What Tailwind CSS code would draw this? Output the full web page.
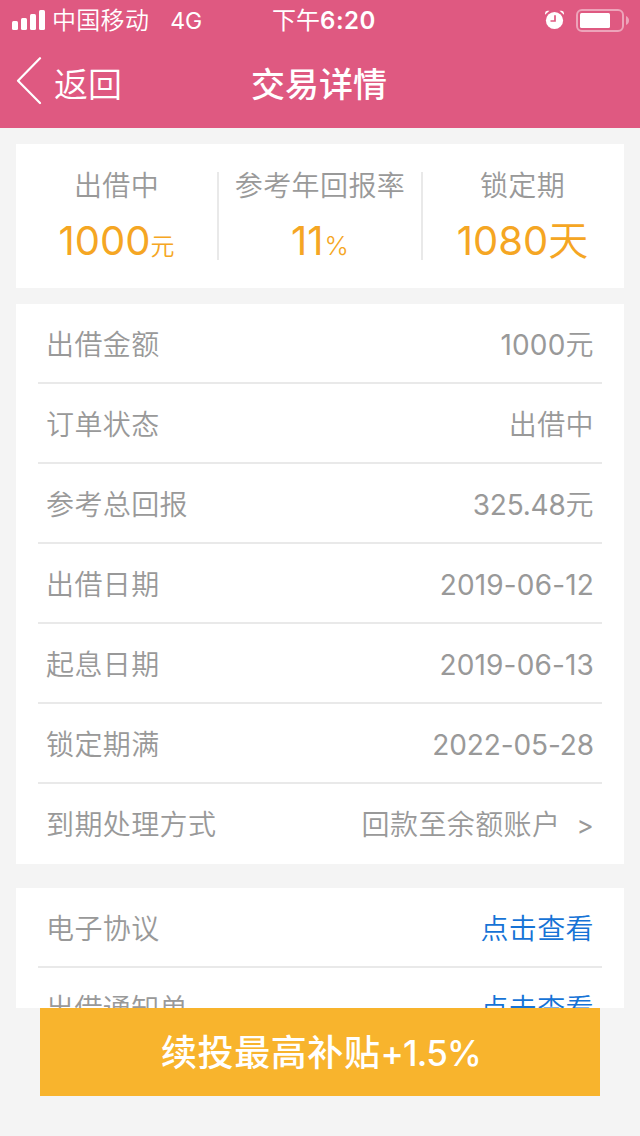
<!DOCTYPE html>
<html lang="zh-CN">
<head>
<meta charset="utf-8">
<title>交易详情</title>
<script src="https://cdn.jsdelivr.net/npm/@tailwindcss/browser@4"></script>
</head>
<body class="flex h-[1136px] w-[640px] flex-col overflow-hidden bg-[#f4f4f4] font-['Inter','Noto_Sans_CJK_SC',sans-serif] text-[28px] text-[#999]">
  <header class="h-32 shrink-0 bg-[#df5981] text-white">
    <div class="grid h-10 grid-cols-3 items-start text-[24px] leading-[42px]">
      <div class="flex items-start pl-3">
        <svg class="mt-2.5 h-5 w-[33px]" viewBox="0 0 33 20" fill="currentColor"><rect y="11" width="6" height="9" rx="1.5"/><rect x="9" y="8" width="6" height="12" rx="1.5"/><rect x="18" y="4" width="6" height="16" rx="1.5"/><rect x="27" width="6" height="20" rx="1.5"/></svg>
        <span class="ml-[7px] font-[350] tracking-[0.3px]">中国移动</span>
        <span class="ml-5 pl-px text-[23px]">4G</span>
      </div>
      <div class="pl-2 text-center font-semibold tracking-[0.5px]"><span class="font-normal tracking-[0]">下午</span>6:20</div>
      <div class="flex items-center justify-end pt-2 pr-[11px]">
        <svg class="mr-3 h-5 w-5" viewBox="0 0 20 20"><circle cx="10.500" cy="10.500" r="8.600" fill="#fff"/><path d="M1 4.800V3.500Q1 1 3.500 .8H5.500ZM20 4.800V3.500Q20 1 17.500 .8H15.500Z" fill="#fff"/><path d="M11 5.200V11H6.500" fill="none" stroke="#df5981" stroke-width="1.700"/></svg>
        <svg class="h-6 w-[53px]" viewBox="0 0 53 24"><rect x="1" y="2" width="46" height="21" rx="5" fill="none" stroke="#fff" stroke-opacity=".45" stroke-width="2"/><rect x="4" y="5" width="30" height="15" rx="1.500" fill="#fff"/><path d="M50 8Q53 9.500 53 12.500T50 17Z" fill="#fff" fill-opacity=".45"/></svg>
      </div>
    </div>
    <div class="grid h-[88px] grid-cols-3 text-[34px] leading-[89px]">
      <div class="flex items-start pl-4">
        <svg class="mt-[17px] h-12 w-[26px]" viewBox="0 0 26 48" fill="none" stroke="currentColor" stroke-width="2.200" stroke-linecap="round" stroke-linejoin="round"><path d="M24 1.200 2 23.800 24 46"/></svg>
        <span class="ml-3 font-[350]">返回</span>
      </div>
      <div class="pr-0.5 text-center font-medium">交易详情</div>
    </div>
  </header>
  <main class="flex flex-col px-4 pt-4">
    <section class="flex h-36 items-start bg-white pt-7 text-center font-[350] tracking-[0.4px]">
      <div class="h-[88px] w-[203px] border-r-2 border-[#e9e9e9]">
        <div class="leading-[29px]">出借中</div>
        <div class="mt-[15px] text-[40px] leading-[50px] tracking-normal text-[#f5a623]"><span class="font-normal">1000</span><span class="text-[24px]">元</span></div>
      </div>
      <div class="h-[88px] w-[204px] border-r-2 border-[#e9e9e9]">
        <div class="leading-[29px]">参考年回报率</div>
        <div class="mt-[15px] text-[40px] leading-[50px] tracking-normal text-[#f5a623]"><span class="font-normal">11</span><span class="ml-px text-[26px]">%</span></div>
      </div>
      <div class="h-[88px] w-[201px] pr-1">
        <div class="pl-0.5 leading-[29px]">锁定期</div>
        <div class="mt-[15px] pl-0.5 text-[40px] leading-[50px] tracking-normal text-[#f5a623]"><span class="font-normal">1080</span>天</div>
      </div>
    </section>
    <section class="mt-4 bg-white px-[22px] font-[350] leading-[82px] tracking-[0.4px]">
      <div class="flex h-20 justify-between border-b-2 border-[#e9e9e9] px-2"><span>出借金额</span><span><span class="font-normal tracking-[0.2px]">1000</span>元</span></div>
      <div class="flex h-20 justify-between border-b-2 border-[#e9e9e9] px-2"><span>订单状态</span><span>出借中</span></div>
      <div class="flex h-20 justify-between border-b-2 border-[#e9e9e9] px-2"><span>参考总回报</span><span><span class="font-normal tracking-[-0.2px]">325.48</span>元</span></div>
      <div class="flex h-20 justify-between border-b-2 border-[#e9e9e9] px-2"><span>出借日期</span><span class="font-normal tracking-[0.15px]">2019-06-12</span></div>
      <div class="flex h-20 justify-between border-b-2 border-[#e9e9e9] px-2"><span>起息日期</span><span class="font-normal tracking-[0.15px]">2019-06-13</span></div>
      <div class="flex h-20 justify-between border-b-2 border-[#e9e9e9] px-2"><span>锁定期满</span><span class="font-normal tracking-[-0.1px]">2022-05-28</span></div>
      <div class="flex h-20 justify-between px-2"><span>到期处理方式</span><span class="flex gap-4"><span>回款至余额账户</span><span class="pt-px text-[26px] font-normal">&gt;</span></span></div>
    </section>
    <section class="mt-6 h-[120px] overflow-hidden bg-white px-[22px] font-[350] leading-[82px] tracking-[0.4px]">
      <div class="flex h-20 justify-between border-b-2 border-[#e9e9e9] px-2"><span>电子协议</span><span class="text-[#1673d6]">点击查看</span></div>
      <div class="flex h-20 justify-between px-2"><span>出借通知单</span><span class="text-[#1673d6]">点击查看</span></div>
    </section>
    <button class="mx-6 h-[88px] bg-[#f8b42d] pl-0.5 text-[36px] font-medium leading-[90px] text-white"><span class="tracking-[0.6px]">续投最高补贴</span><span class="text-[35px] tracking-[-0.8px]">+1.5%</span></button>
  </main>
</body>
</html>
